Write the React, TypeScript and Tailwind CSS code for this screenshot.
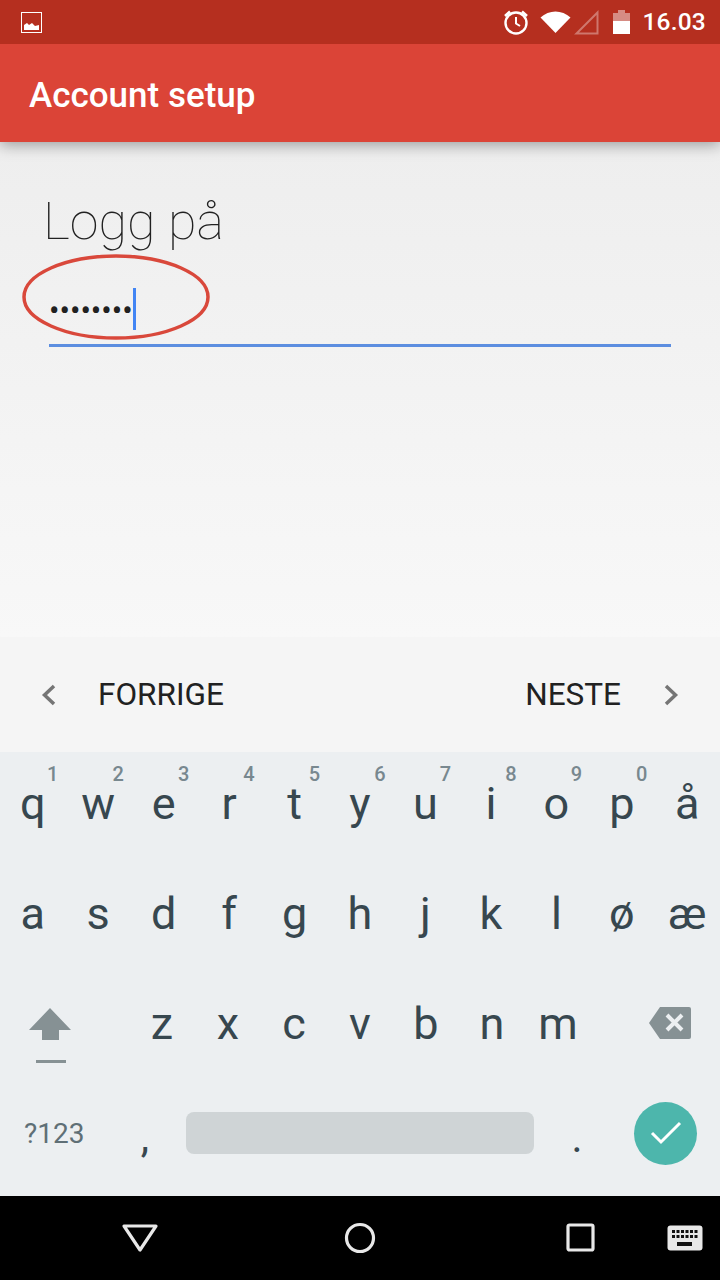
import React from 'react'

const topRow: [string, string][] = [
  ['q', '1'], ['w', '2'], ['e', '3'], ['r', '4'], ['t', '5'], ['y', '6'], ['u', '7'], ['i', '8'], ['o', '9'], ['p', '0'], ['å', ''],
]
const homeRow = ['a', 's', 'd', 'f', 'g', 'h', 'j', 'k', 'l', 'ø', 'æ']
const shiftRow = ['z', 'x', 'c', 'v', 'b', 'n', 'm']

const Key: React.FC<{ label: string; hint?: string }> = ({ label, hint }) => (
  <div className="relative flex flex-1 items-center justify-center pb-[6px] text-[45px] text-[#37474f]">
    {label}
    {hint && <span className="absolute left-[47px] top-[10px] text-[20px] font-medium leading-6 text-[#78888f]">{hint}</span>}
  </div>
)

const StatusBar = () => (
  <div className="relative z-20 flex h-[44px] items-center bg-[#b52f1f] pl-[21px] pr-[14px] text-white">
    <svg width="21" height="21" viewBox="0 0 21 21">
      <rect x="0.5" y="0.5" width="20" height="20" fill="none" stroke="#fff" />
      <path d="M3 18v-5l3-2 2 2 3-2 3 3 4-1v5z" fill="#fff" />
    </svg>
    <svg className="ml-auto" width="28" height="28" viewBox="0 0 28 28" fill="none" stroke="#fff">
      <circle cx="14" cy="15" r="10.500" strokeWidth="2.4" />
      <path d="M14 9v6.5l4 2.5" strokeWidth="2" />
      <path d="M3 8l5-4.500M25 8l-5-4.500" strokeWidth="2.6" />
    </svg>
    <svg className="ml-[10px]" width="31" height="26" viewBox="0 0 31 26">
      <path d="M0.5 8.5C9 0.5 22 0.5 30.5 8.500L15.500 24z" fill="#fff" />
    </svg>
    <svg className="ml-[3px]" width="25" height="25" viewBox="0 0 25 25" fill="none">
      <path d="M23.500 2.500V23.500H2.500z" stroke="#fff" strokeOpacity="0.35" strokeWidth="2" />
    </svg>
    <svg className="ml-[14px]" width="17" height="24" viewBox="0 0 17 24">
      <path d="M5 0h7v3h5v9H0V3h5z" fill="#fff" fillOpacity="0.45" />
      <rect x="0" y="11" width="17" height="13" fill="#fff" />
    </svg>
    <span className="ml-[12px] text-[24.5px] font-medium leading-none tracking-[0.2px]">16.03</span>
  </div>
)

const NavBar = () => (
  <div className="flex h-[84px] items-center bg-black">
    <svg className="ml-[121px]" width="38" height="30" viewBox="0 0 38 30" fill="none" stroke="#e8e8e8" strokeWidth="3.200" strokeLinejoin="round">
      <path d="M3 3h32L19 27z" />
    </svg>
    <svg className="ml-[185px]" width="32" height="32" viewBox="0 0 32 32" fill="none" stroke="#e8e8e8" strokeWidth="3.200">
      <circle cx="16" cy="16" r="13.500" />
    </svg>
    <svg className="ml-[190px]" width="30" height="30" viewBox="0 0 30 30" fill="none" stroke="#e8e8e8" strokeWidth="3.200">
      <rect x="2" y="2" width="25" height="25" rx="1.500" />
    </svg>
    <svg className="ml-[71px]" width="36" height="26" viewBox="0 0 36 26">
      <rect x="0.500" y="0.500" width="35" height="25" rx="3" fill="#e8e8e8" />
      <path d="M5 5h3v3H5zM9.500 5h3v3h-3zM14 5h3v3h-3zM18.500 5h3v3h-3zM23 5h3v3h-3zM27.500 5h3v3h-3zM5 10h3v3H5zM9.500 10h3v3h-3zM14 10h3v3h-3zM18.500 10h3v3h-3zM23 10h3v3h-3zM27.500 10h3v3h-3zM10 17h15v4H10z" fill="#111" />
    </svg>
  </div>
)

export default function App() {
  return (
    <div className="flex h-[1280px] w-[720px] flex-col overflow-hidden font-['Roboto',sans-serif]">
      <StatusBar />
      <div className="relative z-10 flex h-[98px] items-center bg-[#db4437] pl-[29px] pt-[6px] text-[35px] font-medium text-white shadow-[0_3px_14px_rgba(0,0,0,0.35)]">
        Account setup
      </div>

      <div className="relative flex-1 bg-gradient-to-b from-[#eeeeee] to-[#f8f8f8] pl-[43px] pt-[47px]">
        <div className="text-[52px] font-thin leading-[66px] text-[#212121]">Logg på</div>
        <div className="ml-[6px] mr-[49px] mt-[21px] flex h-[71px] items-start border-b-[3px] border-[#5c8ee0]">
          <span className="mt-[14px] text-[31px] leading-[42px] text-[#212121]">••••••••</span>
          <span className="mt-[12px] h-[42px] w-[3px] bg-[#4285f4]" />
        </div>
        <svg className="absolute left-[21px] top-[112px]" width="192" height="88" viewBox="0 0 192 88" fill="none">
          <ellipse cx="95" cy="43" rx="92" ry="41" stroke="#d9483b" strokeWidth="3.500" />
        </svg>
      </div>

      <div className="flex h-[115px] items-center justify-between bg-[#f5f5f5] pl-[41px] pr-[41px] text-[31.500px] text-[#212121]">
        <div className="flex items-center gap-[42px]">
          <svg width="15" height="22" viewBox="0 0 15 22" fill="none" stroke="#757575" strokeWidth="3.500">
            <path d="M13 2L3.500 11 13 20" />
          </svg>
          FORRIGE
        </div>
        <div className="flex items-center gap-[43px]">
          NESTE
          <svg width="15" height="22" viewBox="0 0 15 22" fill="none" stroke="#757575" strokeWidth="3.500">
            <path d="M2 2l9.500 9L2 20" />
          </svg>
        </div>
      </div>

      <div className="flex h-[444px] flex-col bg-[#eceff1]">
        <div className="flex h-[110px]">
          {topRow.map(([label, hint]) => <Key key={label} label={label} hint={hint} />)}
        </div>
        <div className="flex h-[110px]">
          {homeRow.map(label => <Key key={label} label={label} />)}
        </div>
        <div className="flex h-[110px]">
          <div className="flex w-[129px] items-center pl-[29px]">
            <svg width="42" height="56" viewBox="0 0 42 56" className="mt-[18px]" fill="#869194">
              <path d="M21 0l21 22H30v10H13V22H0z" />
              <rect x="7" y="52" width="30" height="3" />
            </svg>
          </div>
          {shiftRow.map(label => <Key key={label} label={label} />)}
          <div className="flex w-[129px] items-center justify-end pb-[8px] pr-[29px]">
            <svg width="42" height="32" viewBox="0 0 42 32">
              <path d="M11 0h29a2 2 0 0 1 2 2v28a2 2 0 0 1-2 2H11L0 16z" fill="#869194" />
              <path d="M18 8l15 15M33 8L18 23" stroke="#eceff1" strokeWidth="4" />
            </svg>
          </div>
        </div>
        <div className="flex h-[114px] items-center pb-[12px]">
          <div className="w-[110px] pl-[24px] pt-[2px] text-[28px] text-[#5f6f76]">?123</div>
          <div className="w-[76px] pr-[6px] pt-[8px] text-center text-[42px] text-[#37474f]">,</div>
          <div className="h-[42px] w-[348px] rounded-[8px] bg-[#cfd4d6]" />
          <div className="w-[86px] pt-[8px] text-center text-[42px] text-[#37474f]">.</div>
          <div className="ml-[14px] flex h-[63px] w-[63px] items-center justify-center rounded-full bg-[#4db6ac]">
            <svg width="32" height="26" viewBox="0 0 32 26" fill="none" stroke="#fff" strokeWidth="3">
              <path d="M2 13l9 9L30 3" />
            </svg>
          </div>
        </div>
      </div>

      <NavBar />
    </div>
  )
}
